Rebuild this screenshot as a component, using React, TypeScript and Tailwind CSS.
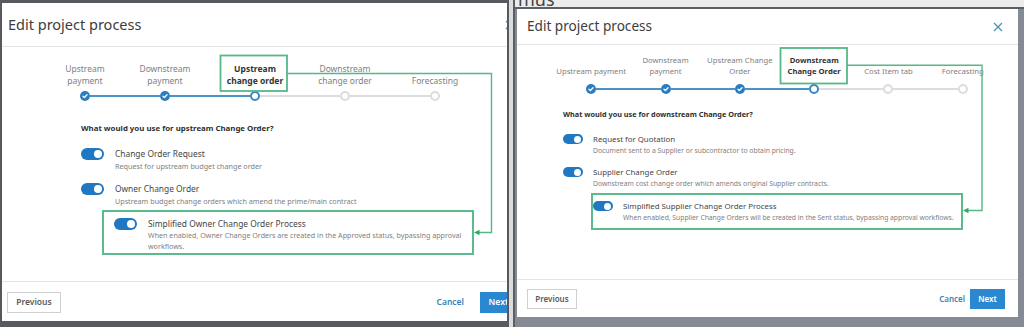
import React from "react";

type StepState = "done" | "current" | "todo";
type Step = { lines: string[]; state: StepState };

function Dot({ state }: { state: StepState }) {
  if (state === "done")
    return (
      <span className="w-[10px] h-[10px] shrink-0 rounded-full bg-[#2a7dc1] flex items-center justify-center">
        <svg width="8" height="8" viewBox="0 0 8 8" fill="none" stroke="white" strokeWidth={1.3} strokeLinecap="round" strokeLinejoin="round">
          <path d="M2 4.2 3.4 5.5 6 2.7" />
        </svg>
      </span>
    );
  return (
    <span
      className={`w-[10px] h-[10px] shrink-0 rounded-full bg-white border-2 ${
        state === "current" ? "border-[#3a86c2]" : "border-[#dcdcdc]"
      }`}
    />
  );
}

function Stepper({
  steps,
  gridClass,
  labelClass,
  dotRowClass,
}: {
  steps: Step[];
  gridClass: string;
  labelClass: string;
  dotRowClass: string;
}) {
  const cur = steps.findIndex((s) => s.state === "current");
  return (
    <div className={`grid ${gridClass}`}>
      {steps.map((s, i) => (
        <div key={i} className="flex flex-col">
          <div
            className={`flex flex-col justify-end items-center text-center whitespace-nowrap ${labelClass} ${
              s.state === "current" ? "font-bold text-[#333333]" : "text-[#808080]"
            }`}
          >
            {s.lines.map((l) => (
              <span key={l}>{l}</span>
            ))}
          </div>
          <div className={`flex items-center ${dotRowClass}`}>
            <span className={`flex-1 h-[2px] ${i === 0 ? "" : i <= cur ? "bg-[#4a92c8]" : "bg-[#dddddd]"}`} />
            <Dot state={s.state} />
            <span
              className={`flex-1 h-[2px] ${
                i === steps.length - 1 ? "" : i + 1 <= cur ? "bg-[#4a92c8]" : "bg-[#dddddd]"
              }`}
            />
          </div>
        </div>
      ))}
    </div>
  );
}

function Toggle({ cls, knob }: { cls: string; knob: string }) {
  return (
    <span className={`shrink-0 rounded-full bg-[#1f78c1] flex items-center justify-end pr-[2px] ${cls}`}>
      <span className={`rounded-full bg-white ${knob}`} />
    </span>
  );
}

function CloseX() {
  return (
    <svg width="10" height="10" viewBox="0 0 10 10" stroke="#4a92bb" strokeWidth={1.3} fill="none">
      <path d="M1 1 9 9M9 1 1 9" />
    </svg>
  );
}

const leftSteps: Step[] = [
  { lines: ["Upstream", "payment"], state: "done" },
  { lines: ["Downstream", "payment"], state: "done" },
  { lines: ["Upstream", "change order"], state: "current" },
  { lines: ["Downstream", "change order"], state: "todo" },
  { lines: ["Forecasting"], state: "todo" },
];

const rightSteps: Step[] = [
  { lines: ["Upstream payment"], state: "done" },
  { lines: ["Downstream", "payment"], state: "done" },
  { lines: ["Upstream Change", "Order"], state: "done" },
  { lines: ["Downstream", "Change Order"], state: "current" },
  { lines: ["Cost Item tab"], state: "todo" },
  { lines: ["Forecasting"], state: "todo" },
];

function LeftModal() {
  return (
    <div className="w-[509px] h-[327px] shrink-0 overflow-hidden border-t-[3px] border-l-2 border-r-2 border-b-[6px] border-[#56595d] bg-white">
      <div className="relative w-[525px] h-full flex flex-col bg-white">
        <header className="h-[44px] shrink-0 flex items-center justify-between pl-[6px] pr-[12px] border-b border-[#e6e6e6]">
          <h1 className="text-[14.5px] text-[#3d3d3d]">Edit project process</h1>
          <CloseX />
        </header>

        <div className="flex-1 pt-[16px]">
          <div className="ml-[48px]">
            <Stepper
              steps={leftSteps}
              gridClass="grid-cols-[70px_90px_90px_90px_90px]"
              labelClass="h-[24px] text-[8.5px] leading-[12px]"
              dotRowClass="mt-[4px] h-[10px]"
            />
          </div>

          <div className="pl-[79px] mt-[21px]">
            <div className="text-[7.85px] leading-[12px] font-bold text-[#2f2f2f]">
              What would you use for upstream Change Order?
            </div>

            <div className="flex items-start gap-[11px] mt-[14px]">
              <Toggle cls="w-[23px] h-[12px]" knob="w-[8px] h-[8px]" />
              <div>
                <div className="text-[8.4px] leading-[12px] text-[#454545]">Change Order Request</div>
                <div className="text-[7.2px] leading-[12px] text-[#808080]">Request for upstream budget change order</div>
              </div>
            </div>

            <div className="flex items-start gap-[11px] mt-[11px]">
              <Toggle cls="w-[23px] h-[12px]" knob="w-[8px] h-[8px]" />
              <div>
                <div className="text-[8.4px] leading-[12px] text-[#454545]">Owner Change Order</div>
                <div className="text-[7.2px] leading-[12px] text-[#808080]">
                  Upstream budget change orders which amend the prime/main contract
                </div>
              </div>
            </div>

            <div className="ml-[21px] w-[372px] mt-[3px] border-2 border-[#5cbb8c] pl-[10px] pt-[6px] pb-[2px] flex items-start gap-[11px]">
              <Toggle cls="w-[23px] h-[12px]" knob="w-[8px] h-[8px]" />
              <div>
                <div className="text-[8.4px] leading-[12px] text-[#454545]">Simplified Owner Change Order Process</div>
                <div className="text-[7.15px] leading-[10.5px] text-[#808080]">
                  When enabled, Owner Change Orders are created in the Approved status, bypassing approval
                  <br />
                  workflows.
                </div>
              </div>
            </div>
          </div>
        </div>

        <footer className="h-[40px] shrink-0 border-t border-[#e6e6e6] flex items-start justify-between pt-[10px] pl-[5px] pr-[10px]">
          <button className="w-[54px] h-[21px] border border-[#d0d0d0] bg-white text-[8.5px] font-semibold text-[#5c5c5c]">
            Previous
          </button>
          <div className="flex items-center gap-[16px]">
            <span className="text-[8.5px] font-semibold text-[#3b82b8]">Cancel</span>
            <button className="w-[37px] h-[21px] bg-[#2a88d0] text-[8.5px] font-semibold text-white">Next</button>
          </div>
        </footer>

        <svg className="absolute inset-0 pointer-events-none" width="525" height="318" fill="none">
          <rect x="218.5" y="52.5" width="66.5" height="35.5" stroke="#55b886" strokeWidth={1.8} />
          <path d="M285 70.5H489.5V229.5H476" stroke="#55b886" strokeWidth={1.4} />
          <path d="M472 229.5 477.5 226.8V232.2Z" fill="#2fa868" />
        </svg>
      </div>
    </div>
  );
}

function RightModal() {
  return (
    <div className="w-[511px] h-[327px] shrink-0 flex flex-col bg-[#858b95] border-l-2 border-[#5b5e63]">
      <div className="h-[9px] shrink-0 overflow-hidden bg-[#ececec] border-b-2 border-[#5b5e63]">
        <span className="block -mt-[10px] ml-[3px] text-[18px] leading-[18px] text-[#444444]">mus</span>
      </div>
      <div className="flex flex-1 pl-[2px]">
        <div className="relative w-[501px] h-[308px] flex flex-col bg-white">
          <header className="h-[36px] shrink-0 flex items-center justify-between pl-[10px] pr-[15px] border-b border-[#e6e6e6]">
            <h1 className="text-[13.6px] text-[#3d3d3d]">Edit project process</h1>
            <CloseX />
          </header>

          <div className="flex-1 pt-[10px]">
            <div className="ml-[37px]">
              <Stepper
                steps={rightSteps}
                gridClass="grid-cols-[repeat(6,74.33px)]"
                labelClass="h-[22px] text-[7.7px] leading-[11px]"
                dotRowClass="mt-[7px] h-[10px]"
              />
            </div>

            <div className="pl-[46px] mt-[14px]">
              <div className="text-[7.3px] leading-[12px] font-bold text-[#2f2f2f]">
                What would you use for downstream Change Order?
              </div>

              <div className="flex items-start gap-[10px] mt-[13px]">
                <Toggle cls="w-[20px] h-[10px] mt-[1px]" knob="w-[7px] h-[7px]" />
                <div>
                  <div className="text-[7.85px] leading-[12px] text-[#454545]">Request for Quotation</div>
                  <div className="text-[6.8px] leading-[11px] text-[#808080]">
                    Document sent to a Supplier or subcontractor to obtain pricing.
                  </div>
                </div>
              </div>

              <div className="flex items-start gap-[10px] mt-[10px]">
                <Toggle cls="w-[20px] h-[10px] mt-[1px]" knob="w-[7px] h-[7px]" />
                <div>
                  <div className="text-[7.85px] leading-[12px] text-[#454545]">Supplier Change Order</div>
                  <div className="text-[6.8px] leading-[11px] text-[#808080]">
                    Downstream cost change order which amends original Supplier contracts.
                  </div>
                </div>
              </div>

              <div className="ml-[28px] w-[372px] mt-[4px] border-2 border-[#5cbb8c] pt-[5px] pb-[5px] flex items-start gap-[10px]">
                <Toggle cls="w-[20px] h-[10px] mt-[1px]" knob="w-[7px] h-[7px]" />
                <div>
                  <div className="text-[7.85px] leading-[12px] text-[#454545]">Simplified Supplier Change Order Process</div>
                  <div className="text-[6.75px] leading-[11px] text-[#808080] whitespace-nowrap">
                    When enabled, Supplier Change Orders will be created in the Sent status, bypassing approval workflows.
                  </div>
                </div>
              </div>
            </div>
          </div>

          <footer className="h-[38px] shrink-0 border-t border-[#e6e6e6] flex items-start justify-between pt-[9px] pl-[10px] pr-[13px]">
            <button className="w-[50px] h-[20px] border border-[#d0d0d0] bg-white text-[8px] font-semibold text-[#5c5c5c]">
              Previous
            </button>
            <div className="flex items-center gap-[5px]">
              <span className="text-[8px] font-semibold text-[#3b82b8]">Cancel</span>
              <button className="w-[35px] h-[20px] bg-[#2a88d0] text-[8px] font-semibold text-white">Next</button>
            </div>
          </footer>

          <svg className="absolute inset-0 pointer-events-none" width="501" height="308" fill="none">
            <rect x="263.5" y="39" width="66.5" height="35.5" stroke="#55b886" strokeWidth={1.8} />
            <path d="M330 56.3H465V201.5H450" stroke="#55b886" strokeWidth={1.4} />
            <path d="M446 201.5 451.5 198.8V204.2Z" fill="#2fa868" />
          </svg>
        </div>
      </div>
    </div>
  );
}

export default function App() {
  return (
    <div className="flex w-[1024px] h-[327px] overflow-hidden bg-[#dcdcdc] gap-[4px] font-['Noto_Sans',sans-serif]">
      <LeftModal />
      <RightModal />
    </div>
  );
}
